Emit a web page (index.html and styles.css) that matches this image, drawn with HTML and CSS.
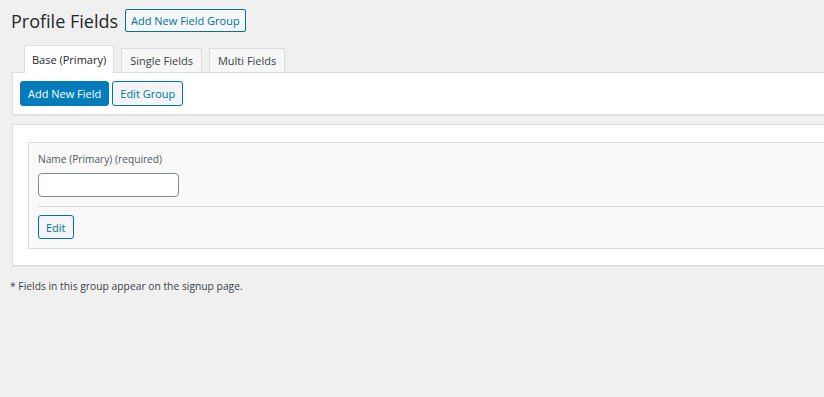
FILE: index.html
```html
<!DOCTYPE html>
<html>
<head>
  <link rel="stylesheet" href="styles.css">
</head>
<body>
  <div class="wrap">
    <div class="page-head">
      <h1>Profile Fields</h1>
      <a class="btn btn-outline btn-head" href="#">Add New Field Group</a>
    </div>

    <div class="tabs">
      <a class="tab active" href="#">Base (Primary)</a>
      <a class="tab" href="#">Single Fields</a>
      <a class="tab" href="#">Multi Fields</a>
    </div>

    <div class="panel toolbar">
      <a class="btn btn-primary" href="#">Add New Field</a>
      <a class="btn btn-outline" href="#">Edit Group</a>
    </div>

    <div class="panel fields">
      <div class="field-box">
        <label for="name-field">Name (Primary) (required)</label>
        <input type="text" id="name-field">
        <div class="field-actions">
          <a class="btn btn-outline btn-small" href="#">Edit</a>
        </div>
      </div>
    </div>

    <p class="note">* Fields in this group appear on the signup page.</p>
  </div>
</body>
</html>
```

FILE: styles.css
```css
body {
  margin: 0;
  padding: 0;
  font-family: "Open Sans", "Noto Sans", sans-serif;
  font-size: 11px;
  background: #f0f0f0;
  color: #3c434a;
  overflow: hidden;
}

.wrap {
  padding: 0 0 0 10px;
  margin-right: -30px;
}

.page-head {
  display: flex;
  align-items: center;
  gap: 7px;
  padding: 9px 0 0 1px;
  height: 23px;
}

h1 {
  font-size: 18px;
  font-weight: 400;
  margin: 0;
  color: #23282d;
}

.btn {
  display: inline-flex;
  align-items: center;
  justify-content: center;
  box-sizing: border-box;
  height: 25px;
  padding: 0 7px;
  border-radius: 3px;
  text-decoration: none;
  font-size: 11px;
  border: 1px solid #0071a1;
}

.btn-outline {
  background: #f3f5f6;
  color: #0071a1;
}

.btn-head {
  height: 23px;
  padding: 0 5px;
  border-radius: 2px;
  background: #f6f7f7;
}

.btn-primary {
  background: #007cba;
  border-color: #007cba;
  color: #fff;
}

.btn-small {
  height: 24px;
  padding: 0 7px;
}

.tabs {
  display: flex;
  align-items: flex-end;
  gap: 7px;
  margin: 13px 0 0 14px;
}

.tab {
  display: block;
  padding: 0 8px;
  height: 24px;
  line-height: 23px;
  box-sizing: border-box;
  border: 1px solid #dcdcde;
  border-bottom: none;
  background: #f6f7f7;
  color: #3c434a;
  text-decoration: none;
  font-size: 11px;
}

.tab.active {
  height: 28px;
  line-height: 27px;
  background: #fff;
  color: #23282d;
  margin-bottom: -1px;
  position: relative;
  padding: 0 7px;
}

.panel {
  background: #fff;
  border: 1px solid #dcdcde;
  box-shadow: 0 1px 1px rgba(0, 0, 0, 0.04);
  margin-left: 2px;
}

.toolbar {
  display: flex;
  gap: 3px;
  height: 43px;
  box-sizing: border-box;
  padding: 8px 7px;
}

.fields {
  margin-top: 9px;
  padding: 17px 0 16px 15px;
}

.field-box {
  background: #f9f9f9;
  border: 1px solid #dcdcde;
  padding: 9px 0 9px 9px;
  display: flex;
  flex-direction: column;
}

label {
  font-size: 10.2px;
  color: #50575e;
  line-height: 15px;
}

input[type="text"] {
  width: 141px;
  height: 24px;
  box-sizing: border-box;
  margin: 6px 0 9px;
  border: 1px solid #7e8993;
  border-radius: 4px;
  background: #fff;
}

.field-actions {
  border-top: 1px solid #dcdcde;
  padding-top: 8px;
}

.note {
  margin: 13px 0 0;
  font-size: 10.3px;
  color: #3c434a;
}
```
